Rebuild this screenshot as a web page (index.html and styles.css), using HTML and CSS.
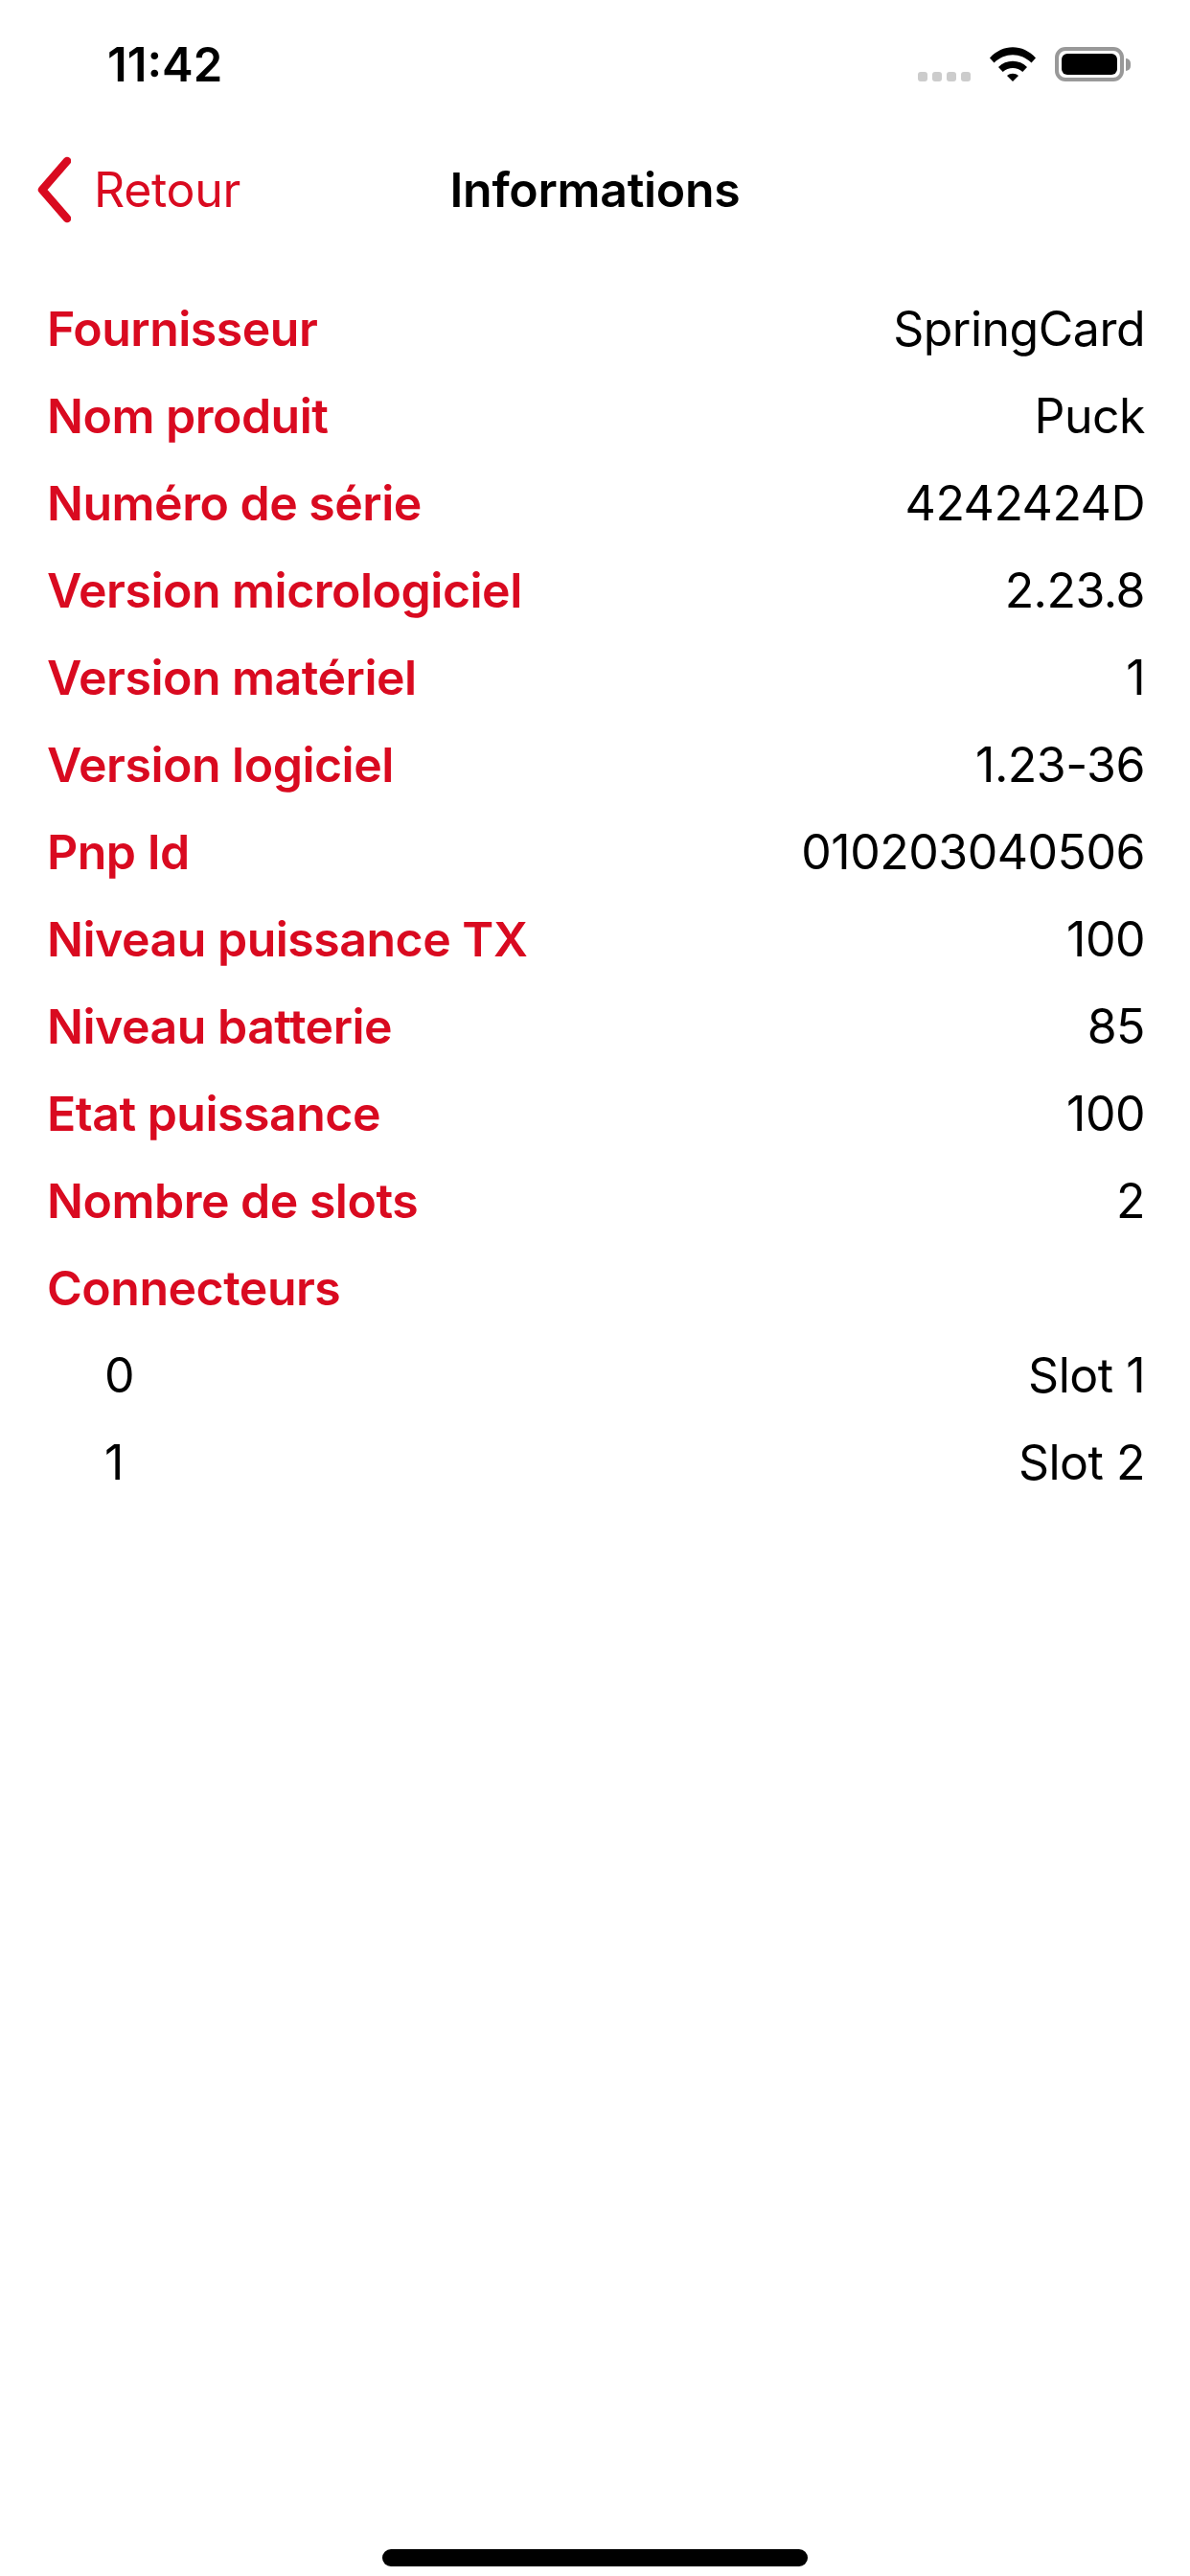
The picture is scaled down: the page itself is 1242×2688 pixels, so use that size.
FILE: index.html
```html
<!DOCTYPE html>
<html>
<head>
  <meta charset="UTF-8" />
  <title>Informations</title>
  <link rel="stylesheet" href="styles.css">
</head>
<body>
  <div class="status-bar">
    <span class="time">11:42</span>
    <div class="status-icons">
      <div class="signal"><i></i><i></i><i></i><i></i></div>
      <svg class="wifi" width="48" height="36" viewBox="0 0 48 36">
        <path d="M0 11.500 C13.500 -3.500 34.500 -3.500 48 11.500 L43.500 16.500 C32 5.500 16 5.500 4.500 16.500 Z" />
        <path d="M9 21 C17 12.500 31 12.500 39 21 L34.300 26 C28.500 20.500 19.500 20.500 13.700 26 Z" />
        <path d="M18 30 C21.500 27 26.500 27 30 30 L24 36 Z" />
      </svg>
      <div class="battery"><div class="battery-fill"></div></div>
      <div class="battery-tip"></div>
    </div>
  </div>

  <div class="nav">
    <a class="back">
      <svg width="36" height="70" viewBox="0 0 36 70">
        <path d="M32 5 L6 35 L32 65" />
      </svg>
      Retour
    </a>
    <div class="title">Informations</div>
  </div>

  <div class="list">
    <div class="row"><span class="label">Fournisseur</span><span>SpringCard</span></div>
    <div class="row"><span class="label">Nom produit</span><span>Puck</span></div>
    <div class="row"><span class="label">Numéro de série</span><span>4242424D</span></div>
    <div class="row"><span class="label">Version micrologiciel</span><span>2.23.8</span></div>
    <div class="row"><span class="label">Version matériel</span><span>1</span></div>
    <div class="row"><span class="label">Version logiciel</span><span>1.23-36</span></div>
    <div class="row"><span class="label">Pnp Id</span><span>010203040506</span></div>
    <div class="row"><span class="label">Niveau puissance TX</span><span>100</span></div>
    <div class="row"><span class="label">Niveau batterie</span><span>85</span></div>
    <div class="row"><span class="label">Etat puissance</span><span>100</span></div>
    <div class="row"><span class="label">Nombre de slots</span><span>2</span></div>
    <div class="row"><span class="label">Connecteurs</span></div>
    <div class="row sub"><span>0</span><span>Slot 1</span></div>
    <div class="row sub"><span>1</span><span>Slot 2</span></div>
  </div>

  <div class="home-bar"></div>
</body>
</html>
```

FILE: styles.css
```css
body {
  font-family: Inter, 'Liberation Sans', sans-serif;
  background-color: #fff;
  color: #000;
  margin: 0;
  padding: 0;
  width: 1242px;
  height: 2688px;
  position: relative;
  overflow: hidden;
}
.status-bar {
  height: 135px;
  display: flex;
  justify-content: space-between;
  align-items: flex-start;
  padding: 0 62px 0 112px;
  box-sizing: border-box;
}
.time {
  font-size: 49px;
  font-weight: 600;
  line-height: 58px;
  margin-top: 39px;
}
.status-icons {
  display: flex;
  align-items: flex-end;
  margin-top: 49px;
  height: 36px;
}
.signal {
  display: flex;
  gap: 5px;
  margin-right: 20px;
}
.signal i {
  width: 10px;
  height: 10px;
  border-radius: 3px;
  background-color: #ccc;
}
.wifi {
  margin-right: 20px;
}
.wifi path {
  fill: #000;
}
.battery {
  width: 72px;
  height: 36px;
  box-sizing: border-box;
  border: 4px solid #999;
  border-radius: 11px;
  padding: 3px;
}
.battery-fill {
  height: 100%;
  background-color: #000;
  border-radius: 6px;
}
.battery-tip {
  width: 5px;
  height: 13px;
  margin-left: 2px;
  margin-bottom: 11px;
  background-color: #999;
  border-radius: 0 6px 6px 0;
}
.nav {
  height: 126px;
  position: relative;
  display: flex;
  align-items: center;
  justify-content: center;
}
.back {
  position: absolute;
  left: 38px;
  top: 28px;
  display: flex;
  align-items: center;
  gap: 24px;
  color: #d90a20;
  font-size: 50px;
  letter-spacing: -0.3px;
}
.back svg {
  fill: none;
  stroke: #d90a20;
  stroke-width: 8.5;
  stroke-linecap: round;
  stroke-linejoin: round;
}
.title {
  font-size: 50px;
  font-weight: 600;
  letter-spacing: -0.3px;
}
.list {
  padding: 36px 47px 0 49px;
}
.row {
  height: 91px;
  display: flex;
  align-items: center;
  justify-content: space-between;
  font-size: 50px;
  letter-spacing: -0.5px;
}
.label {
  color: #d90a20;
  font-weight: 600;
}
.sub {
  padding-left: 60px;
}
.home-bar {
  position: absolute;
  left: 399px;
  top: 2660px;
  width: 444px;
  height: 18px;
  border-radius: 9px;
  background-color: #000;
}
```
